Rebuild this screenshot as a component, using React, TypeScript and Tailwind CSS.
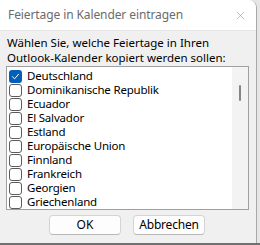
import { X } from 'lucide-react'

const COUNTRIES = [
  { label: 'Deutschland', checked: true },
  { label: 'Dominikanische Republik' },
  { label: 'Ecuador' },
  { label: 'El Salvador' },
  { label: 'Estland' },
  { label: 'Europäische Union' },
  { label: 'Finnland' },
  { label: 'Frankreich' },
  { label: 'Georgien' },
  { label: 'Griechenland' },
]

function CheckBox({ checked }: { checked?: boolean }) {
  if (checked) {
    return (
      <span className="w-[13px] h-[13px] rounded-[3px] bg-[#005fb8] flex items-center justify-center shrink-0">
        <svg width="9" height="9" viewBox="0 0 9 9" fill="none">
          <path d="M1.5 4.8 L3.6 6.8 L7.6 2.2" stroke="white" strokeWidth="1" strokeLinecap="round" strokeLinejoin="round" />
        </svg>
      </span>
    )
  }
  return <span className="w-[13px] h-[13px] rounded-[3px] border border-[#5c5c5c] bg-white shrink-0" />
}

export default function App() {
  return (
    <div className="w-[260px] h-[245px] bg-[#e6e6e6] overflow-hidden flex flex-col" style={{ fontFamily: '"Noto Sans", "Open Sans", sans-serif' }}>
      <div className="w-[257px] h-[243px] bg-[#f0f0f0] border-r border-[#a8a8a8] rounded-tr-[8px] overflow-hidden flex flex-col">
        {/* Title bar */}
        <div className="h-[31px] bg-white border-b border-[#e5e5e5] flex items-center justify-between pl-[8px] pr-[9px] shrink-0">
          <span className="text-[12px] text-[#6b6b6b] tracking-[-0.1px]">Feiertage in Kalender eintragen</span>
          <X size={13} strokeWidth={1} className="text-[#8a8a8a]" />
        </div>

        {/* Body */}
        <div className="flex flex-col px-[6px] pt-[4px]">
          <div className="text-[11.5px] leading-[15px] text-black pl-[1px]">
            <div>Wählen Sie, welche Feiertage in Ihren</div>
            <div>Outlook-Kalender kopiert werden sollen:</div>
          </div>
          <div className="mt-[1px] w-[243px] h-[144px] border border-[#a0a0a0] bg-white flex">
            <ul className="flex-1 pt-[2px] pl-[2px]">
              {COUNTRIES.map(c => (
                <li key={c.label} className="h-[14px] flex items-center gap-[5px] text-[11.5px] leading-[14px] text-black tracking-[-0.2px]">
                  <CheckBox checked={c.checked} />
                  <span className="leading-[14px]">{c.label}</span>
                </li>
              ))}
            </ul>
            <div className="w-[16px] bg-[#f3f3f3] flex justify-center pt-[18px]">
              <div className="w-[2px] h-[16px] rounded-full bg-[#858585]" />
            </div>
          </div>

          {/* Buttons */}
          <div className="flex gap-[12px] pl-[43px] mt-[5px]">
            <button className="w-[72px] h-[20px] rounded-[4px] bg-[#fdfdfd] border border-[#d4d4d4] border-b-[#b8b8b8] text-[12px] text-black leading-none">
              OK
            </button>
            <button className="w-[72px] h-[20px] rounded-[4px] bg-[#fdfdfd] border border-[#d4d4d4] border-b-[#b8b8b8] text-[12px] text-black leading-none tracking-[-0.2px]">
              Abbrechen
            </button>
          </div>
        </div>
      </div>
      <div className="h-[2px] bg-[#707070]" />
    </div>
  )
}
